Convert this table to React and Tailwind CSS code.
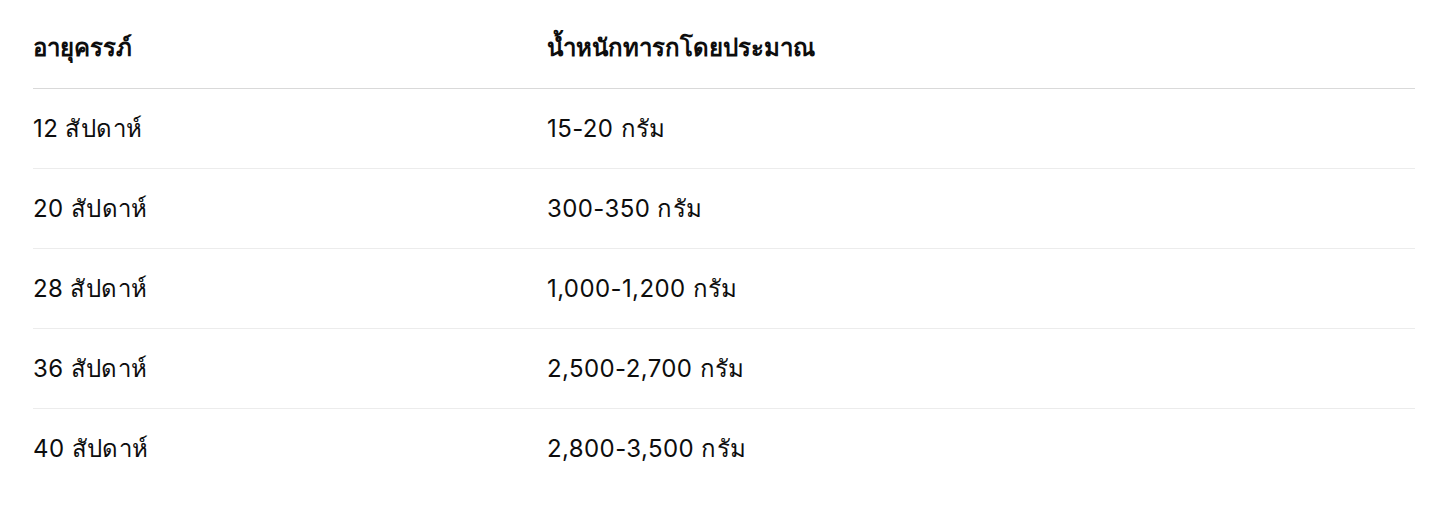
export default function App() {
  const rows = [
    ["12 สัปดาห์", "15-20 กรัม"],
    ["20 สัปดาห์", "300-350 กรัม"],
    ["28 สัปดาห์", "1,000-1,200 กรัม"],
    ["36 สัปดาห์", "2,500-2,700 กรัม"],
    ["40 สัปดาห์", "2,800-3,500 กรัม"],
  ];
  return (
    <div className="w-[1448px] h-[510px] bg-white px-[33px] pt-2 text-[#0d0d0d] text-[24px] leading-8" style={{ fontFamily: '"Inter", "Noto Sans", sans-serif' }}>
      <div className="grid grid-cols-[514px_1fr] h-[81px] items-center border-b border-[#d9d9d9] font-bold">
        <div>อายุครรภ์</div>
        <div>น้ำหนักทารกโดยประมาณ</div>
      </div>
      {rows.map((r, i) => (
        <div key={i} className={`grid grid-cols-[514px_1fr] h-[80px] items-center tracking-[0.4px] ${i < rows.length - 1 ? "border-b border-[#ececec]" : ""}`}>
          <div>{r[0]}</div>
          <div>{r[1]}</div>
        </div>
      ))}
    </div>
  );
}
